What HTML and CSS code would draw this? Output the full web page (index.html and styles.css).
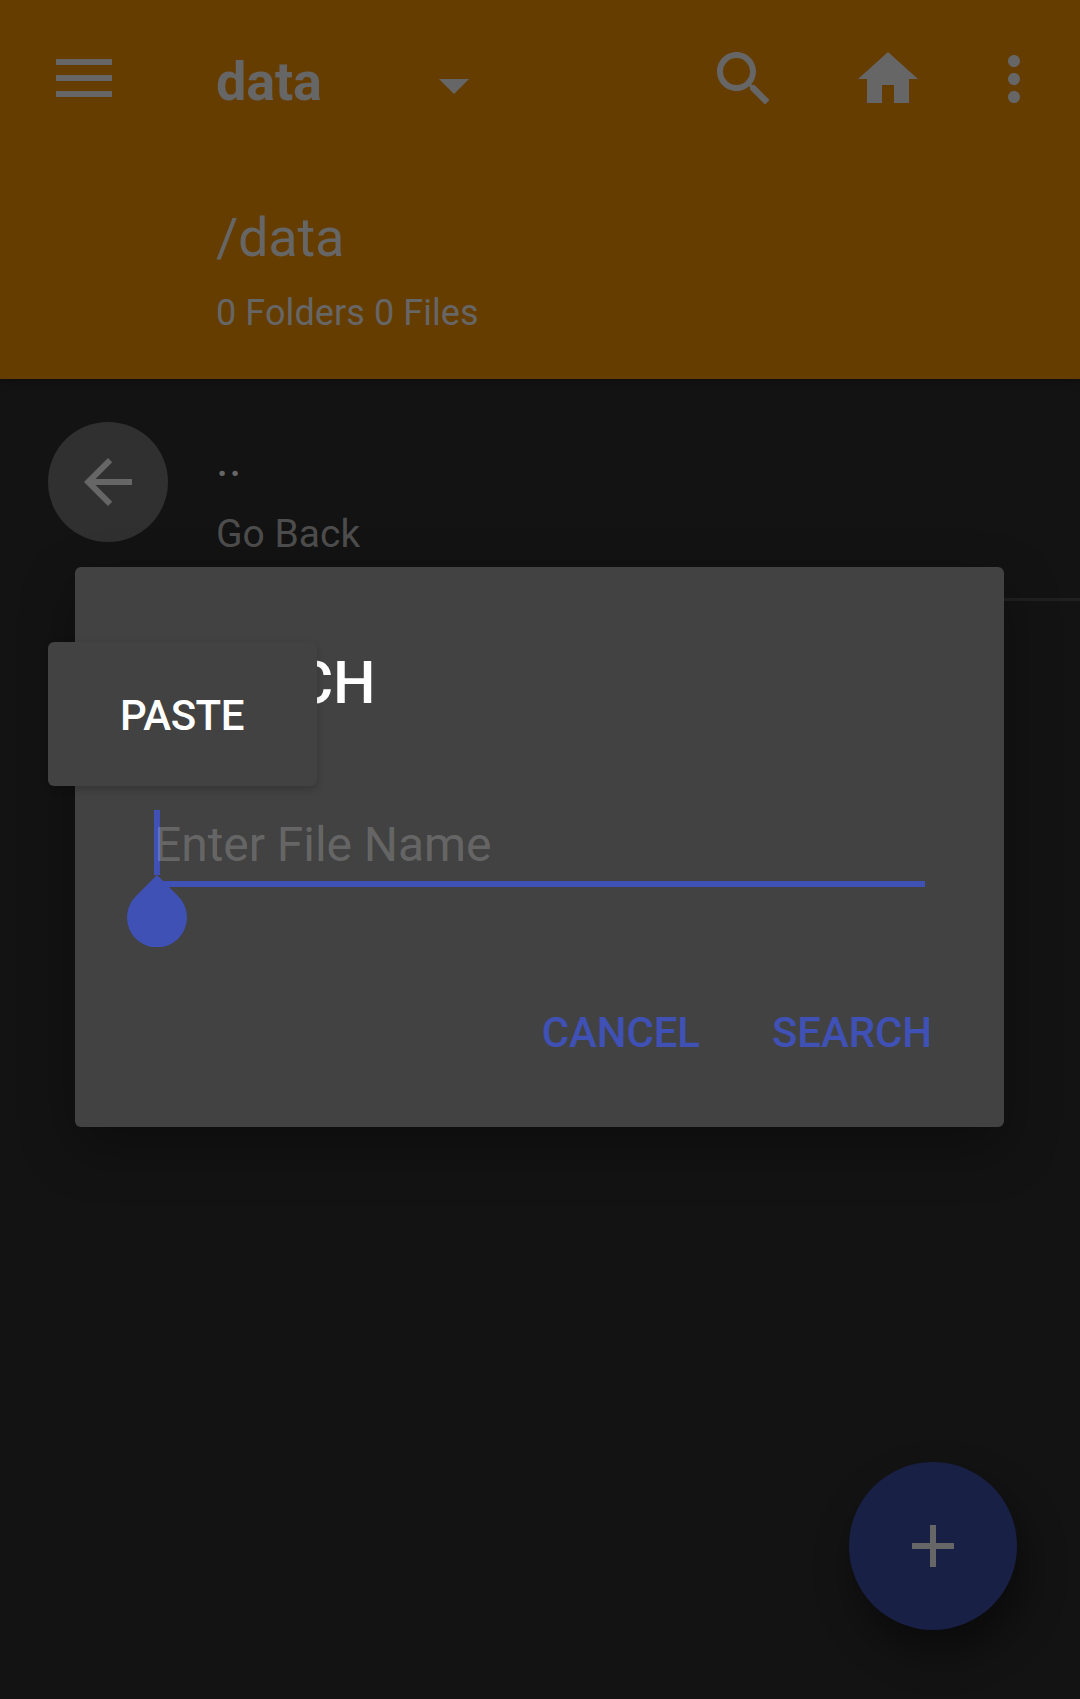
FILE: index.html
```html
<!DOCTYPE html>
<html lang="en">
<head>
<meta charset="utf-8">
<title>data</title>
<link rel="stylesheet" href="styles.css">
</head>
<body>
<div class="screen">
  <header class="appbar">
    <div class="toolbar">
      <svg class="menu" viewBox="0 0 56 38"><path d="M0 0h56v6H0zM0 16h56v6H0zM0 32h56v6H0z"/></svg>
      <h1 class="title">data</h1>
      <svg class="icon caret" viewBox="0 0 24 24"><path d="M7 10l5 5 5-5z"/></svg>
      <svg class="icon" viewBox="0 0 24 24"><path d="M15.5 14h-.79l-.28-.27C15.41 12.59 16 11.11 16 9.5 16 5.91 13.09 3 9.5 3S3 5.91 3 9.5 5.91 16 9.5 16c1.61 0 3.09-.59 4.23-1.57l.27.28v.79l5 4.99L20.49 19l-4.99-5zm-6 0C7.01 14 5 11.99 5 9.5S7.01 5 9.5 5 14 7.01 14 9.5 11.99 14 9.5 14z"/></svg>
      <svg class="icon home" viewBox="0 0 24 24"><path d="M10 20v-6h4v6h5v-8h3L12 3 2 12h3v8z"/></svg>
      <svg class="icon more" viewBox="0 0 24 24"><path d="M12 8c1.1 0 2-.9 2-2s-.9-2-2-2-2 .9-2 2 .9 2 2 2zm0 2c-1.1 0-2 .9-2 2s.9 2 2 2 2-.9 2-2-.9-2-2-2zm0 6c-1.1 0-2 .9-2 2s.9 2 2 2 2-.9 2-2-.9-2-2-2z"/></svg>
    </div>
    <div class="path">/data</div>
    <div class="counts">0 Folders 0 Files</div>
  </header>
  <main class="list">
    <div class="row">
      <span class="avatar"><svg class="icon" viewBox="0 0 24 24"><path d="M20 11H7.83l5.59-5.59L12 4l-8 8 8 8 1.41-1.41L7.83 13H20v-2z"/></svg></span>
      <div class="labels">
        <div class="name">..</div>
        <div class="desc">Go Back</div>
      </div>
    </div>
  </main>
  <button class="fab" aria-label="Add"><svg class="icon" viewBox="0 0 24 24"><path d="M19 13h-6v6h-2v-6H5v-2h6V5h2v6h6v2z"/></svg></button>

  <section class="dialog">
    <h2 class="dialog-title">SEARCH</h2>
    <div class="field"><span class="hint">Enter File Name</span></div>
    <div class="actions">
      <span>CANCEL</span>
      <span>SEARCH</span>
    </div>
    <i class="cursor"></i>
    <svg class="handle" viewBox="0 0 60 72"><path d="M30 0L8.8 21.2A30 30 0 1 0 51.2 21.2z"/></svg>
    <div class="paste">PASTE</div>
  </section>
</div>
</body>
</html>
```
FILE: styles.css
```css
* { box-sizing: border-box; }
body {
  margin: 0;
  background: #131313;
  font-family: Roboto, "Liberation Sans", sans-serif;
  color: #666;
}
h1, h2 { margin: 0; }
svg { display: block; fill: currentColor; flex: none; }
.screen {
  position: relative;
  height: 1699px;
  overflow: hidden;
}
.icon { width: 72px; height: 72px; }

.appbar {
  height: 379px;
  padding-left: 56px;
  background: #663d00;
  box-shadow: 0 2px 10px rgba(0, 0, 0, .3);
}
.toolbar {
  display: flex;
  align-items: flex-start;
  height: 168px;
  padding: 43px 30px 0 0;
}
.menu { width: 56px; height: 38px; margin-top: 16px; }
.title {
  width: 202px;
  margin: 7px 0 0 104px;
  font-size: 54px;
  line-height: 64px;
  font-weight: 700;
  letter-spacing: -.2px;
}
.caret { margin: 6px 218px 0 0; }
.home { margin-left: 72px; }
.more { margin-left: 54px; }
.path {
  margin: 38px 0 0 160px;
  font-size: 54px;
  line-height: 64px;
  letter-spacing: -.2px;
}
.counts {
  margin: 21px 0 0 160px;
  font-size: 36px;
  line-height: 44px;
  letter-spacing: .08px;
}

.row {
  display: flex;
  height: 222px;
  padding: 43px 0 0 48px;
}
.avatar {
  display: flex;
  align-items: center;
  justify-content: center;
  width: 120px;
  height: 120px;
  border-radius: 50%;
  background: #303030;
}
.labels {
  flex: 1;
  margin-left: 48px;
  border-bottom: 3px solid #202020;
}
.name { margin-top: 10px; font-size: 48px; line-height: 56px; letter-spacing: .4px; }
.desc { margin-top: 23px; font-size: 39px; line-height: 46px; color: #4d4d4d; }

.fab {
  position: absolute;
  left: 849px;
  top: 1462px;
  display: flex;
  align-items: center;
  justify-content: center;
  width: 168px;
  height: 168px;
  padding: 0;
  border: 0;
  border-radius: 50%;
  background: #192046;
  color: #666;
  box-shadow: 8px 22px 42px rgba(0, 0, 0, .45);
}

.dialog {
  position: absolute;
  left: 75px;
  top: 567px;
  width: 929px;
  height: 560px;
  padding: 81px 79px 0 72px;
  border-radius: 6px;
  background: #424242;
  box-shadow: 0 20px 56px rgba(0, 0, 0, .32);
}
.dialog-title {
  font-size: 60px;
  line-height: 70px;
  font-weight: 500;
  letter-spacing: -.2px;
  color: #fff;
}
.field {
  height: 79px;
  margin: 90px 0 0 10px;
  padding-top: 9px;
  border-bottom: 6px solid #3f51b5;
  font-size: 48px;
  line-height: 56px;
  letter-spacing: -.05px;
  color: rgba(255, 255, 255, .2);
}
/* The hint is painted over the text cursor */
.hint {
  position: relative;
  z-index: 1;
  margin-left: -3px;
}
.actions {
  display: flex;
  justify-content: flex-end;
  gap: 72px;
  margin: 121px -7px 0 0;
  font-size: 42px;
  line-height: 50px;
  font-weight: 500;
  letter-spacing: -.1px;
  color: #3f51b5;
}
.cursor {
  position: absolute;
  left: 79px;
  top: 243px;
  width: 6px;
  height: 65px;
  background: #3f51b5;
}
.handle {
  position: absolute;
  left: 52px;
  top: 308px;
  width: 60px;
  height: 72px;
  color: #3f51b5;
}
.paste {
  position: absolute;
  left: -27px;
  top: 75px;
  width: 269px;
  height: 144px;
  border-radius: 6px;
  background: #424242;
  box-shadow: 0 3px 7px rgba(0, 0, 0, .2);
  font-size: 42px;
  line-height: 148px;
  font-weight: 500;
  letter-spacing: -.5px;
  text-align: center;
  text-indent: -1px;
  color: #fff;
}
```
